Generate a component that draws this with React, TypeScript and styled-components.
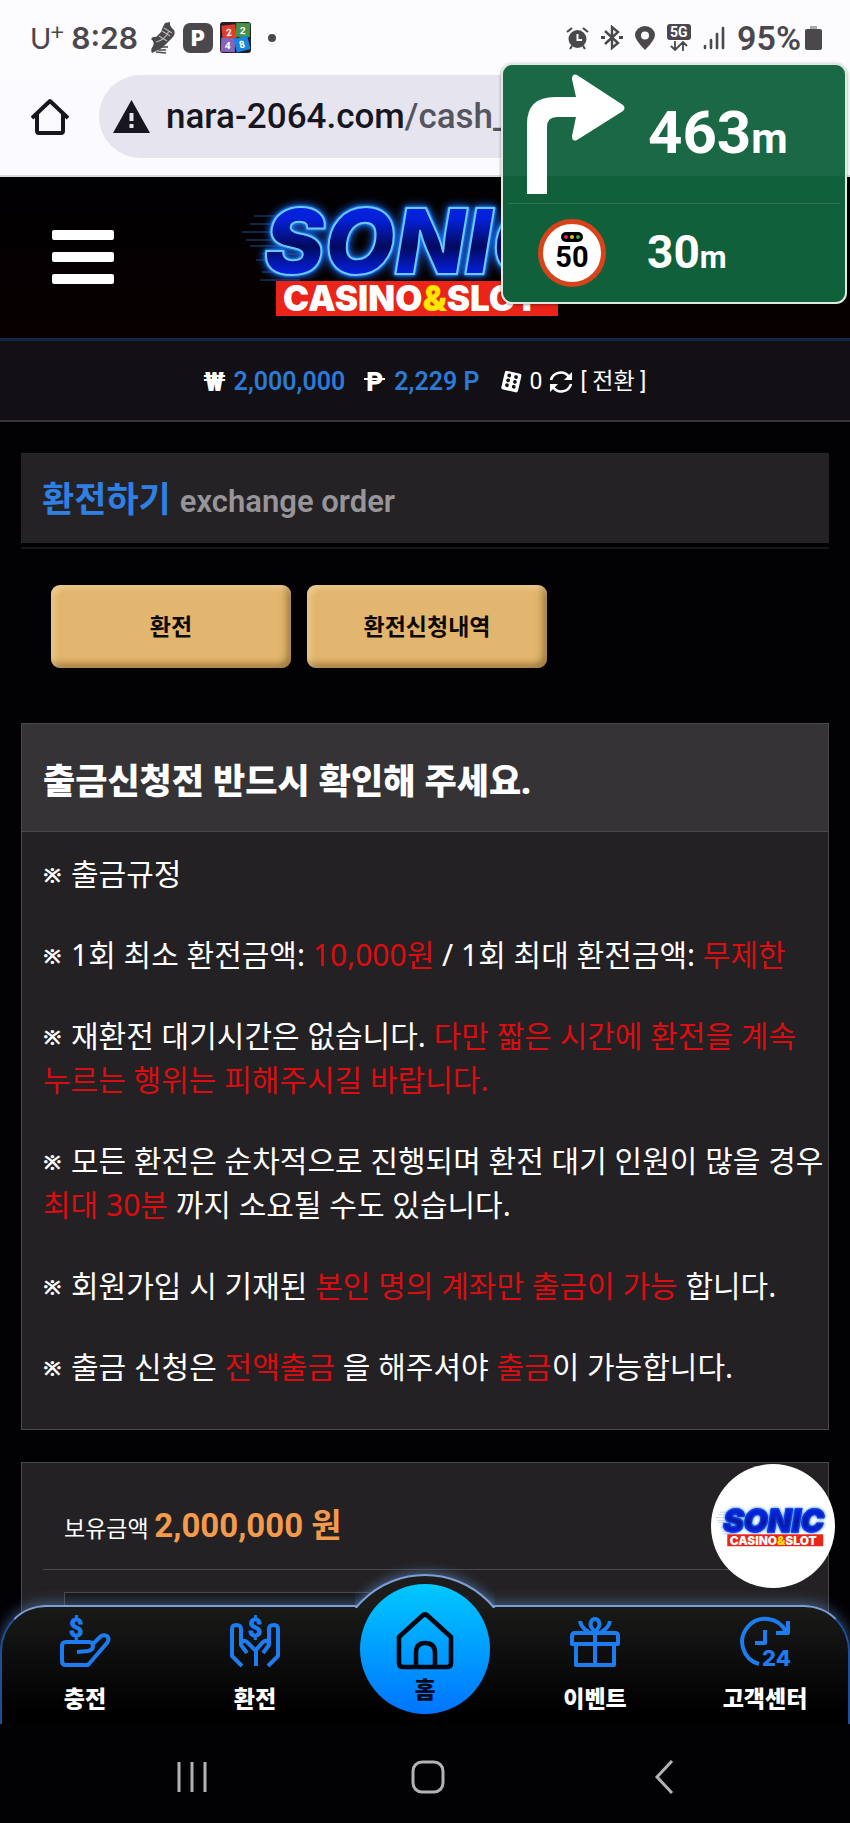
import React from "react";
import styled, { createGlobalStyle } from "styled-components";

const GlobalStyle = createGlobalStyle`
  *, *::before, *::after { box-sizing: border-box; }
  body {
    margin: 0;
    background: #000;
    color: #fff;
    font-family: Roboto, "Noto Sans CJK KR", sans-serif;
  }
  button { font: inherit; color: inherit; border: 0; padding: 0; background: none; }
  h1, h2, p { margin: 0; }
  svg { display: block; flex: none; }
`;

const BLUE = "#1c7cf0";

const Screen = styled.div`
  position: relative;
  display: flex;
  flex-direction: column;
  height: 100vh;
  overflow: hidden;
`;

/* ---------- phone status bar ---------- */

const StatusBar = styled.div`
  display: flex;
  justify-content: space-between;
  align-items: center;
  height: 75px;
  padding: 0 28px 0 30px;
  background: #fcfbfd;
  color: #4b484d;
`;

const StatusGroup = styled.div<{ $gap: number }>`
  display: flex;
  align-items: center;
  gap: ${(p) => p.$gap}px;
`;

const Carrier = styled.span`
  display: flex;
  align-items: flex-start;
  font: 400 29px/30px Lato, sans-serif;
  sup { font-size: 24px; line-height: 16px; font-weight: 400; margin-left: -1px; }
`;

const Clock = styled.span`
  font: 600 30px/32px Inter, sans-serif;
  margin: 0 5px 0 0;
`;

const Battery = styled.span`
  display: flex;
  align-items: center;
  gap: 4px;
  font: 600 34px/32px Roboto, sans-serif;
`;

/* ---------- browser bar ---------- */

const BrowserBar = styled.div`
  display: flex;
  gap: 30px;
  height: 102px;
  padding: 0 0 17px 31px;
  background: #fbfafe;
  border-bottom: 2px solid #dddbe1;
  color: #17161e;
`;

const HomeButton = styled.button`
  display: flex;
  align-items: center;
`;

const AddressPill = styled.div`
  flex: 1;
  display: flex;
  align-items: center;
  gap: 16px;
  margin-right: 20px;
  padding-left: 14px;
  border-radius: 42px;
  background: #e6e5ef;
  font-size: 35px;
  line-height: 44px;
  font-weight: 500;
`;

const Path = styled.span`
  color: #56545f;
`;

/* ---------- navigation overlay ---------- */

const GuideCard = styled.aside`
  position: absolute;
  top: 63px;
  right: 3px;
  width: 346px;
  z-index: 5;
  border: 2px solid #dfe9e2;
  border-radius: 11px;
  background: linear-gradient(#1a6846 47%, #10603b 47%);
  box-shadow: 0 1px 3px rgba(0, 0, 0, 0.4);
  font-weight: 700;
`;

const GuideRow = styled.div<{ $height: number; $pad: number; $gap: number }>`
  display: flex;
  align-items: center;
  gap: ${(p) => p.$gap}px;
  height: ${(p) => p.$height}px;
  padding-left: ${(p) => p.$pad}px;
`;

const GuideDivider = styled.div`
  height: 1px;
  margin: 0 5px;
  background: #2c7553;
`;

const Distance = styled.span<{ $size: number; $unit: number }>`
  padding-top: 4px;
  font-size: ${(p) => p.$size}px;
  line-height: 60px;
  small { font-size: ${(p) => p.$unit}px; }
`;

const SpeedSign = styled.span`
  display: flex;
  flex-direction: column;
  align-items: center;
  width: 68px;
  height: 68px;
  padding-top: 8px;
  border: 5px solid #d8431a;
  border-radius: 50%;
  background: #fff;
  color: #000;
  font-size: 29px;
  line-height: 30px;
`;

/* ---------- site ---------- */

const Site = styled.div`
  position: relative;
  flex: 1;
  min-height: 0;
  overflow: hidden;
  background: #020104;
`;

const Header = styled.header`
  display: grid;
  grid-template-columns: 1fr auto 1fr;
  align-items: center;
  height: 164px;
  padding: 0 50px 2px;
  background: linear-gradient(#010003, #080000);
  border-bottom: 3px solid #142444;
`;

const MenuButton = styled.button`
  display: flex;
  flex-direction: column;
  gap: 12px;
  width: 66px;
  padding: 2px;
  span { height: 10px; border-radius: 2px; background: #fff; }
`;

const BalanceBar = styled.div`
  display: flex;
  justify-content: center;
  align-items: center;
  gap: 20px;
  height: 81px;
  padding-top: 2px;
  background: #121014;
  border-bottom: 2px solid #38363a;
  font-size: 23px;
  line-height: 30px;
`;

const BalanceItem = styled.span<{ $gap: number }>`
  display: flex;
  align-items: center;
  gap: ${(p) => p.$gap}px;
`;

const Amount = styled.strong`
  font-size: 25px;
  font-weight: 600;
  color: #2d7ad6;
`;

const Currency = styled.span`
  position: relative;
  font-size: 26px;
  font-weight: 900;
`;

const PointSign = styled(Currency)`
  padding: 0 1px;
  &::after {
    content: "";
    position: absolute;
    left: -1px;
    right: -1px;
    top: 11px;
    height: 2px;
    background: #fff;
  }
`;

const ConvertButton = styled.button`
  font-size: 23px;
`;

const Main = styled.main`
  padding: 31px 21px 0;
`;

const TitleBar = styled.div`
  display: flex;
  align-items: baseline;
  gap: 9px;
  height: 90px;
  padding: 21px 21px 15px;
  background: #242225;
`;

const TitleRule = styled.div`
  height: 2px;
  margin-top: 4px;
  background: #161518;
`;

const Title = styled.h1`
  font-size: 35px;
  line-height: 54px;
  font-weight: 700;
  color: #2f80e4;
`;

const Subtitle = styled.span`
  font-size: 31px;
  font-weight: 600;
  color: #97959a;
`;

const Tabs = styled.div`
  display: flex;
  gap: 16px;
  padding: 36px 30px 55px;
`;

const TabButton = styled.button`
  width: 240px;
  height: 83px;
  padding-bottom: 4px;
  border-radius: 9px;
  background: #e2b66e;
  box-shadow: inset 3px 3px 6px rgba(255, 235, 195, 0.45), inset -4px -4px 7px rgba(90, 60, 10, 0.5);
  color: #0d0805;
  font-size: 23px;
  font-weight: 700;
`;

const Panel = styled.section`
  margin-bottom: 32px;
  border: 1px solid #4a484b;
  background: #232124;
`;

const PanelTitle = styled.h2`
  padding: 30px 21px 24px;
  border-bottom: 1px solid #4a484b;
  background: #353336;
  font-family: "Noto Sans", "Noto Sans CJK KR", sans-serif;
  font-size: 35px;
  line-height: 53px;
  font-weight: 800;
`;

const Rules = styled.div`
  display: flex;
  flex-direction: column;
  gap: 37px;
  padding: 20px 0 40px 21px;
  font-family: "Noto Sans", "Noto Sans CJK KR", sans-serif;
  font-size: 30px;
  line-height: 44px;
  white-space: nowrap;
`;

const Red = styled.em`
  font-style: normal;
  color: #dc0d10;
`;

const Mark = styled.span`
  display: inline-block;
  width: 28px;
  font-size: 22px;
  line-height: 20px;
  font-weight: 700;
  vertical-align: 2px;
`;

const FormPanel = styled(Panel)`
  height: 340px;
  padding: 38px 21px 0;
`;

const Holding = styled.p`
  height: 69px;
  padding-left: 21px;
  border-bottom: 1px solid #4a484b;
  font-size: 23px;
  line-height: 50px;
  strong { font-size: 33px; color: #f39a4c; }
`;

const AmountInput = styled.input`
  display: block;
  width: 50%;
  height: 60px;
  margin: 22px 0 0 21px;
  border: 1px solid #4a484b;
  background: #161517;
  color: #fff;
  font-size: 23px;
`;

/* ---------- floating pieces of the site ---------- */

const ChatBubble = styled.button`
  position: absolute;
  right: 15px;
  bottom: 136px;
  display: flex;
  align-items: center;
  justify-content: center;
  width: 124px;
  height: 124px;
  padding: 0 0 0 9px;
  border-radius: 50%;
  background: #fff;
`;

const BottomNav = styled.nav`
  position: absolute;
  left: 0;
  right: 0;
  bottom: 0;
  display: grid;
  grid-template-columns: repeat(5, 1fr);
  height: 119px;
  border-radius: 46px 46px 0 0;
  background: linear-gradient(#1a1b18, #0d0d0e 45%, #000 90%);
  box-shadow: 0 -2px 14px rgba(95, 140, 200, 0.55);
  &::before {
    content: "";
    position: absolute;
    inset: 0;
    border: 2px solid #7b9fd6;
    border-color: #7b9fd6 #1d4f9b;
    border-bottom: 0;
    border-radius: inherit;
    pointer-events: none;
  }
`;

const Hump = styled.div`
  position: absolute;
  left: 50%;
  top: -31px;
  width: 140px;
  height: 34px;
  margin-left: -70px;
  clip-path: inset(-20px 0 0 0);
  &::before {
    content: "";
    position: absolute;
    left: -20px;
    top: 0;
    width: 180px;
    height: 180px;
    border: 2px solid #7b9fd6;
    border-radius: 50%;
    background: #1c1c1d;
    box-shadow: 0 -2px 12px rgba(95, 140, 200, 0.6);
  }
`;

const NavLink = styled.a`
  display: flex;
  flex-direction: column;
  align-items: center;
  gap: 16px;
  padding-top: 12px;
  color: #fff;
  font-size: 23px;
  line-height: 34px;
  font-weight: 800;
  text-decoration: none;
`;

const HomeLink = styled(NavLink)`
  position: relative;
  justify-self: center;
  width: 130px;
  height: 130px;
  gap: 4px;
  margin-top: -21px;
  padding-top: 28px;
  border-radius: 50%;
  background: linear-gradient(#00c8ff, #0074ff);
  color: #050b1c;
`;

const SystemBar = styled.div`
  display: grid;
  grid-template-columns: repeat(3, 28%);
  justify-content: center;
  align-items: center;
  height: 99px;
  padding: 6px 0 0 6px;
  background: #020103;
  button { display: flex; justify-content: center; }
`;

/* ---------- drawings ---------- */

const speedLines = [
  [14, 24], [10, 32], [2, 40], [6, 48], [10, 54], [22, 62], [16, 68], [22, 80], [20, 88],
];

function Logo({ width, light }: { width: number; light?: boolean }) {
  return (
    <svg width={width} height={(width * 130) / 370} viewBox="0 0 370 130" overflow="visible" role="img" aria-label="SONIC CASINO&SLOT">
      <defs>
        <linearGradient id={light ? "sonicLight" : "sonicDark"} x1="0" y1="0" x2="0" y2="1">
          <stop offset="0" stopColor="#0628e8" />
          <stop offset="0.3" stopColor="#0420d8" />
          <stop offset="0.55" stopColor={light ? "#0718a0" : "#020a5f"} />
          <stop offset="0.8" stopColor="#0420e0" />
        </linearGradient>
      </defs>
      <g stroke="#2a5fa8" strokeWidth="1" opacity="0.8">
        {speedLines.map(([x, y]) => (
          <line key={y} x1={x} y1={y} x2="60" y2={y} />
        ))}
      </g>
      <text
        x="24"
        y="82"
        fontFamily="Inter, sans-serif"
        fontWeight="900"
        fontStyle="italic"
        fontSize="91"
        fill={light ? "url(#sonicLight)" : "url(#sonicDark)"}
        stroke={light ? "#1038d8" : "#6cc8ff"}
        strokeWidth={light ? 4 : 2}
        strokeLinejoin="round"
        style={{
          filter: "drop-shadow(0 0 1px #1478f0) drop-shadow(0 0 1px #1478f0) drop-shadow(0 0 4px #1c6cff)",
        }}
      >
        SONIC
      </text>
      <rect x="36" y="89" width="282" height="35" fill="#ea2418" />
      <text x="43" y="119" fontFamily="Inter, sans-serif" fontWeight="900" fontSize="35" fill="#fff">
        CASINO<tspan fill="#ffe600">&amp;</tspan>SLOT
      </text>
    </svg>
  );
}

const lineIcon = {
  width: 50,
  height: 50,
  viewBox: "0 0 50 50",
  overflow: "visible",
  fill: "none",
  stroke: BLUE,
  strokeWidth: 4,
  strokeLinejoin: "round" as const,
};

const DepositIcon = () => (
  <svg {...lineIcon}>
    <path d="M17 35L28 34Q33 33 33 29Q33 25 29 25H6Q2 25 2 29V44Q2 48 6 48H28L47 26Q50 22 47 19Q43 17 40 20L33 27" />
    <text x="9" y="20" fontSize="25" fontWeight="700" fill={BLUE} strokeWidth="1">$</text>
  </svg>
);

const WithdrawIcon = () => (
  <svg {...lineIcon}>
    <path d="M12 49L2 39V12Q2 8 6 8Q11 8 11 12V28L17 36M11 27Q13 22 17 25L26 34V49" />
    <path d="M38 49L48 39V12Q48 8 44 8Q39 8 39 12V28L33 36M39 27Q37 22 33 25L25 34" />
    <text x="18" y="20" fontSize="25" fontWeight="700" fill={BLUE} strokeWidth="1">$</text>
  </svg>
);

const GiftIcon = () => (
  <svg {...lineIcon}>
    <path d="M2 27V19Q2 16 5 16H45Q48 16 48 19V27Z M6 27V48H44V27M25 16V48" />
    <path d="M10 4Q11 11 19 15M40 4Q39 11 31 15" />
    <path d="M25 15Q19 9 21 5Q22 2 25 2Q28 2 29 5Q31 9 25 15Z" />
  </svg>
);

const SupportIcon = () => (
  <svg {...lineIcon}>
    <path d="M19 47A23 23 0 1 1 46 15" />
    <path d="M48 4V16H36M25 13V26H15" />
    <text x="22" y="49" fontFamily="Inter, sans-serif" fontSize="22" fontWeight="800" fill={BLUE} stroke="none">24</text>
  </svg>
);

const HouseIcon = () => (
  <svg width="58" height="58" viewBox="0 0 58 58" fill="none" stroke="#02060f" strokeWidth="4.6" strokeLinejoin="round">
    <path d="M3 25L26 4Q29 1 32 4L55 25V51Q55 55 51 55H7Q3 55 3 51Z" />
    <path d="M20 55V41Q20 31 29 31Q39 31 39 41V55" />
  </svg>
);

const DiceIcon = () => (
  <svg width="23" height="23" viewBox="0 0 23 23">
    <g transform="rotate(13 11 11)">
      <rect x="3" y="2" width="17" height="19" rx="2" fill="#fff" />
      <g fill="#121014">
        {[6, 11, 16].map((y) => (
          <React.Fragment key={y}>
            <circle cx="8" cy={y} r="1.9" />
            <circle cx="15" cy={y} r="1.9" />
          </React.Fragment>
        ))}
      </g>
    </g>
  </svg>
);

const SyncIcon = () => (
  <svg width="24" height="24" viewBox="0 0 24 24" fill="none" stroke="#fff" strokeWidth="2.6">
    <path d="M2 10A10 10 0 0 1 20 7M22 14A10 10 0 0 1 4 17" />
    <path d="M23 2V10H15ZM1 22V14H9Z" fill="#fff" stroke="none" />
  </svg>
);

const ShoeIcon = () => (
  <svg width="26" height="32" viewBox="0 0 26 32">
    <path d="M1 17Q3 14 6 15L11 10Q13 4 15 1L20 0Q19 4 24 8Q26 12 22 16L12 26L2 31Q0 28 3 24Q5 20 1 17Z" fill="#4b484d" />
    <path d="M12 9L20 14M14 6L22 11M9 14L17 19M6 20Q15 18 19 9" stroke="#b5b3b8" strokeWidth="1.2" fill="none" />
    <path d="M6 30L16 31M8 28L16 28M12 25H18" stroke="#4b484d" strokeWidth="1.4" />
  </svg>
);

const ParkingIcon = () => (
  <svg width="30" height="30" viewBox="0 0 30 30">
    <rect width="30" height="30" rx="7" fill="#4b484d" />
    <text x="8" y="23" fontFamily="Inter, sans-serif" fontSize="21" fontWeight="900" fill="#fff">P</text>
  </svg>
);

const tiles = [
  { x: 2, y: 3, c: "#e03a2c", t: "2", r: -6 },
  { x: 16, y: 1, c: "#469347", t: "2", r: 2 },
  { x: 1, y: 16, c: "#8664bb", t: "4", r: 2 },
  { x: 15, y: 15, c: "#1685dd", t: "8", r: -14 },
];

const PuzzleIcon = () => (
  <svg width="31" height="31" viewBox="0 0 31 31">
    <rect width="31" height="31" rx="3" fill="#221f28" />
    {tiles.map((t) => (
      <g key={t.c} transform={`rotate(${t.r} ${t.x + 7} ${t.y + 7})`}>
        <rect x={t.x} y={t.y} width="14" height="14" fill={t.c} />
        <text x={t.x + 4} y={t.y + 11} fontSize="10" fontWeight="700" fill="#fff">{t.t}</text>
      </g>
    ))}
  </svg>
);

const DotIcon = () => (
  <svg width="20" height="10" viewBox="0 0 20 10">
    <circle cx="14" cy="5" r="4" fill="#4b484d" />
  </svg>
);

const AlarmIcon = () => (
  <svg width="23" height="24" viewBox="0 0 23 24">
    <circle cx="11.500" cy="13" r="9" fill="#4b484d" />
    <path d="M1 6L6 2M22 6L17 2M4 23L6 20M19 23L17 20" stroke="#4b484d" strokeWidth="2.200" />
    <path d="M11.500 8V14H16" stroke="#fcfbfd" strokeWidth="2" fill="none" />
  </svg>
);

const BluetoothIcon = () => (
  <svg width="22" height="25" viewBox="0 0 22 25" fill="none" stroke="#4b484d" strokeWidth="2.400">
    <path d="M4 6L17 18L11 23V2L17 7L4 19" />
    <path d="M0 12.500H4M18 12.500H22" strokeWidth="3" />
  </svg>
);

const PinIcon = () => (
  <svg width="20" height="24" viewBox="0 0 20 24">
    <path d="M10 24Q0 14 0 9A10 9 0 0 1 20 9Q20 14 10 24Z" fill="#4b484d" />
    <circle cx="10" cy="9.500" r="4" fill="#fcfbfd" />
  </svg>
);

const NetworkIcon = () => (
  <svg width="24" height="28" viewBox="0 0 24 28">
    <rect width="24" height="16" rx="3" fill="#4b484d" />
    <text x="3" y="13" fontSize="14" fontWeight="700" fill="#fff">5G</text>
    <path d="M8 17V26M4 22L8 26L12 22M16 27V18M12 22L16 18L20 22" stroke="#4b484d" strokeWidth="1.800" fill="none" />
  </svg>
);

const SignalIcon = () => (
  <svg width="22" height="24" viewBox="0 0 22 24" stroke="#4b484d" strokeWidth="2.600" strokeLinecap="round">
    <path d="M2 20V22M8 14V22M14 8V22M20 2V22" />
  </svg>
);

const BatteryIcon = () => (
  <svg width="17" height="24" viewBox="0 0 17 24">
    <rect x="5" width="7" height="4" fill="#aaa8ac" />
    <rect y="3" width="17" height="21" rx="2" fill="#4b484d" />
  </svg>
);

const BrowserHomeIcon = () => (
  <svg width="38" height="38" viewBox="0 0 38 38" fill="none" stroke="#17161e" strokeWidth="4" strokeLinejoin="round">
    <path d="M1 20L19 3L37 20M6 16V33Q6 35 8 35H30Q32 35 32 33V16" />
  </svg>
);

const WarningIcon = () => (
  <svg width="37" height="33" viewBox="0 0 37 33">
    <path d="M18.500 0L37 33H0Z" fill="#17161e" />
    <path d="M18.500 13V21M18.500 24V28" stroke="#e6e5ef" strokeWidth="4" />
  </svg>
);

const TurnRightIcon = () => (
  <svg width="98" height="120" viewBox="0 0 98 120">
    <path
      d="M0 120V50Q0 23 28 23H49L45 5Q45 -1 50 1L96 31Q99 34 96 37L50 66Q45 68 45 62L49 43H30Q20 43 20 53V120Z"
      fill="#fff"
    />
  </svg>
);

const TrafficLightIcon = () => (
  <svg width="22" height="10" viewBox="0 0 22 10">
    <rect width="22" height="10" rx="5" fill="#000" />
    <circle cx="5" cy="5" r="2" fill="#e0265c" />
    <circle cx="11" cy="5" r="2" fill="#e6c229" />
    <circle cx="17" cy="5" r="2" fill="#2fae3d" />
  </svg>
);

const sysIcon = { height: 34, fill: "none", stroke: "#b4b2b5", strokeWidth: 3 };

const navLeft = [
  { label: "충전", icon: <DepositIcon /> },
  { label: "환전", icon: <WithdrawIcon /> },
];

const navRight = [
  { label: "이벤트", icon: <GiftIcon /> },
  { label: "고객센터", icon: <SupportIcon /> },
];

function Rule({ children }: { children: React.ReactNode }) {
  return (
    <p>
      <Mark>※</Mark>
      {children}
    </p>
  );
}

export default function App() {
  return (
    <Screen>
      <GlobalStyle />

      <StatusBar>
        <StatusGroup $gap={7}>
          <Carrier>U<sup>+</sup></Carrier>
          <Clock>8:28</Clock>
          <ShoeIcon />
          <ParkingIcon />
          <PuzzleIcon />
          <DotIcon />
        </StatusGroup>
        <StatusGroup $gap={12}>
          <AlarmIcon />
          <BluetoothIcon />
          <PinIcon />
          <NetworkIcon />
          <SignalIcon />
          <Battery>95%<BatteryIcon /></Battery>
        </StatusGroup>
      </StatusBar>

      <BrowserBar>
        <HomeButton aria-label="Home"><BrowserHomeIcon /></HomeButton>
        <AddressPill>
          <WarningIcon />
          <span>nara-2064.com<Path>/cash_</Path></span>
        </AddressPill>
      </BrowserBar>

      <GuideCard>
        <GuideRow $height={138} $pad={24} $gap={23}>
          <TurnRightIcon />
          <Distance $size={60} $unit={42}>463<small>m</small></Distance>
        </GuideRow>
        <GuideDivider />
        <GuideRow $height={98} $pad={35} $gap={41}>
          <SpeedSign><TrafficLightIcon />50</SpeedSign>
          <Distance $size={46} $unit={31}>30<small>m</small></Distance>
        </GuideRow>
      </GuideCard>

      <Site>
        <Header>
          <MenuButton aria-label="Menu"><span /><span /><span /></MenuButton>
          <Logo width={370} />
        </Header>

        <BalanceBar>
          <BalanceItem $gap={8}><Currency>₩</Currency><Amount>2,000,000</Amount></BalanceItem>
          <BalanceItem $gap={10}><PointSign>P</PointSign><Amount>2,229 P</Amount></BalanceItem>
          <BalanceItem $gap={7}>
            <DiceIcon />0<SyncIcon />
            <ConvertButton>[ 전환 ]</ConvertButton>
          </BalanceItem>
        </BalanceBar>

        <Main>
          <TitleBar>
            <Title>환전하기</Title>
            <Subtitle>exchange order</Subtitle>
          </TitleBar>
          <TitleRule />

          <Tabs>
            <TabButton>환전</TabButton>
            <TabButton>환전신청내역</TabButton>
          </Tabs>

          <Panel>
            <PanelTitle>출금신청전 반드시 확인해 주세요.</PanelTitle>
            <Rules>
              <Rule>출금규정</Rule>
              <Rule>1회 최소 환전금액: <Red>10,000원</Red> / 1회 최대 환전금액: <Red>무제한</Red></Rule>
              <Rule>
                재환전 대기시간은 없습니다. <Red>다만 짧은 시간에 환전을 계속<br />누르는 행위는 피해주시길 바랍니다.</Red>
              </Rule>
              <Rule>
                모든 환전은 순차적으로 진행되며 환전 대기 인원이 많을 경우<br />
                <Red>최대 30분</Red> 까지 소요될 수도 있습니다.
              </Rule>
              <Rule>회원가입 시 기재된 <Red>본인 명의 계좌만 출금이 가능</Red> 합니다.</Rule>
              <Rule>출금 신청은 <Red>전액출금</Red> 을 해주셔야 <Red>출금</Red>이 가능합니다.</Rule>
            </Rules>
          </Panel>

          <FormPanel>
            <Holding>보유금액 <strong>2,000,000 원</strong></Holding>
            <AmountInput aria-label="환전금액" />
          </FormPanel>
        </Main>

        <ChatBubble aria-label="SONIC"><Logo width={126} light /></ChatBubble>

        <BottomNav>
          <Hump />
          {navLeft.map((n) => (
            <NavLink href="#" key={n.label}>{n.icon}{n.label}</NavLink>
          ))}
          <HomeLink href="#"><HouseIcon />홈</HomeLink>
          {navRight.map((n) => (
            <NavLink href="#" key={n.label}>{n.icon}{n.label}</NavLink>
          ))}
        </BottomNav>
      </Site>

      <SystemBar>
        <button aria-label="Recent apps">
          <svg {...sysIcon} width="32" viewBox="0 0 32 34"><path d="M3 2V32M16 2V32M29 2V32" /></svg>
        </button>
        <button aria-label="Home screen">
          <svg {...sysIcon} width="34" viewBox="0 0 34 34"><rect x="2" y="2" width="30" height="30" rx="9" /></svg>
        </button>
        <button aria-label="Back">
          <svg {...sysIcon} width="20" viewBox="0 0 20 34"><path d="M18 1L3 17L18 33" /></svg>
        </button>
      </SystemBar>
    </Screen>
  );
}
